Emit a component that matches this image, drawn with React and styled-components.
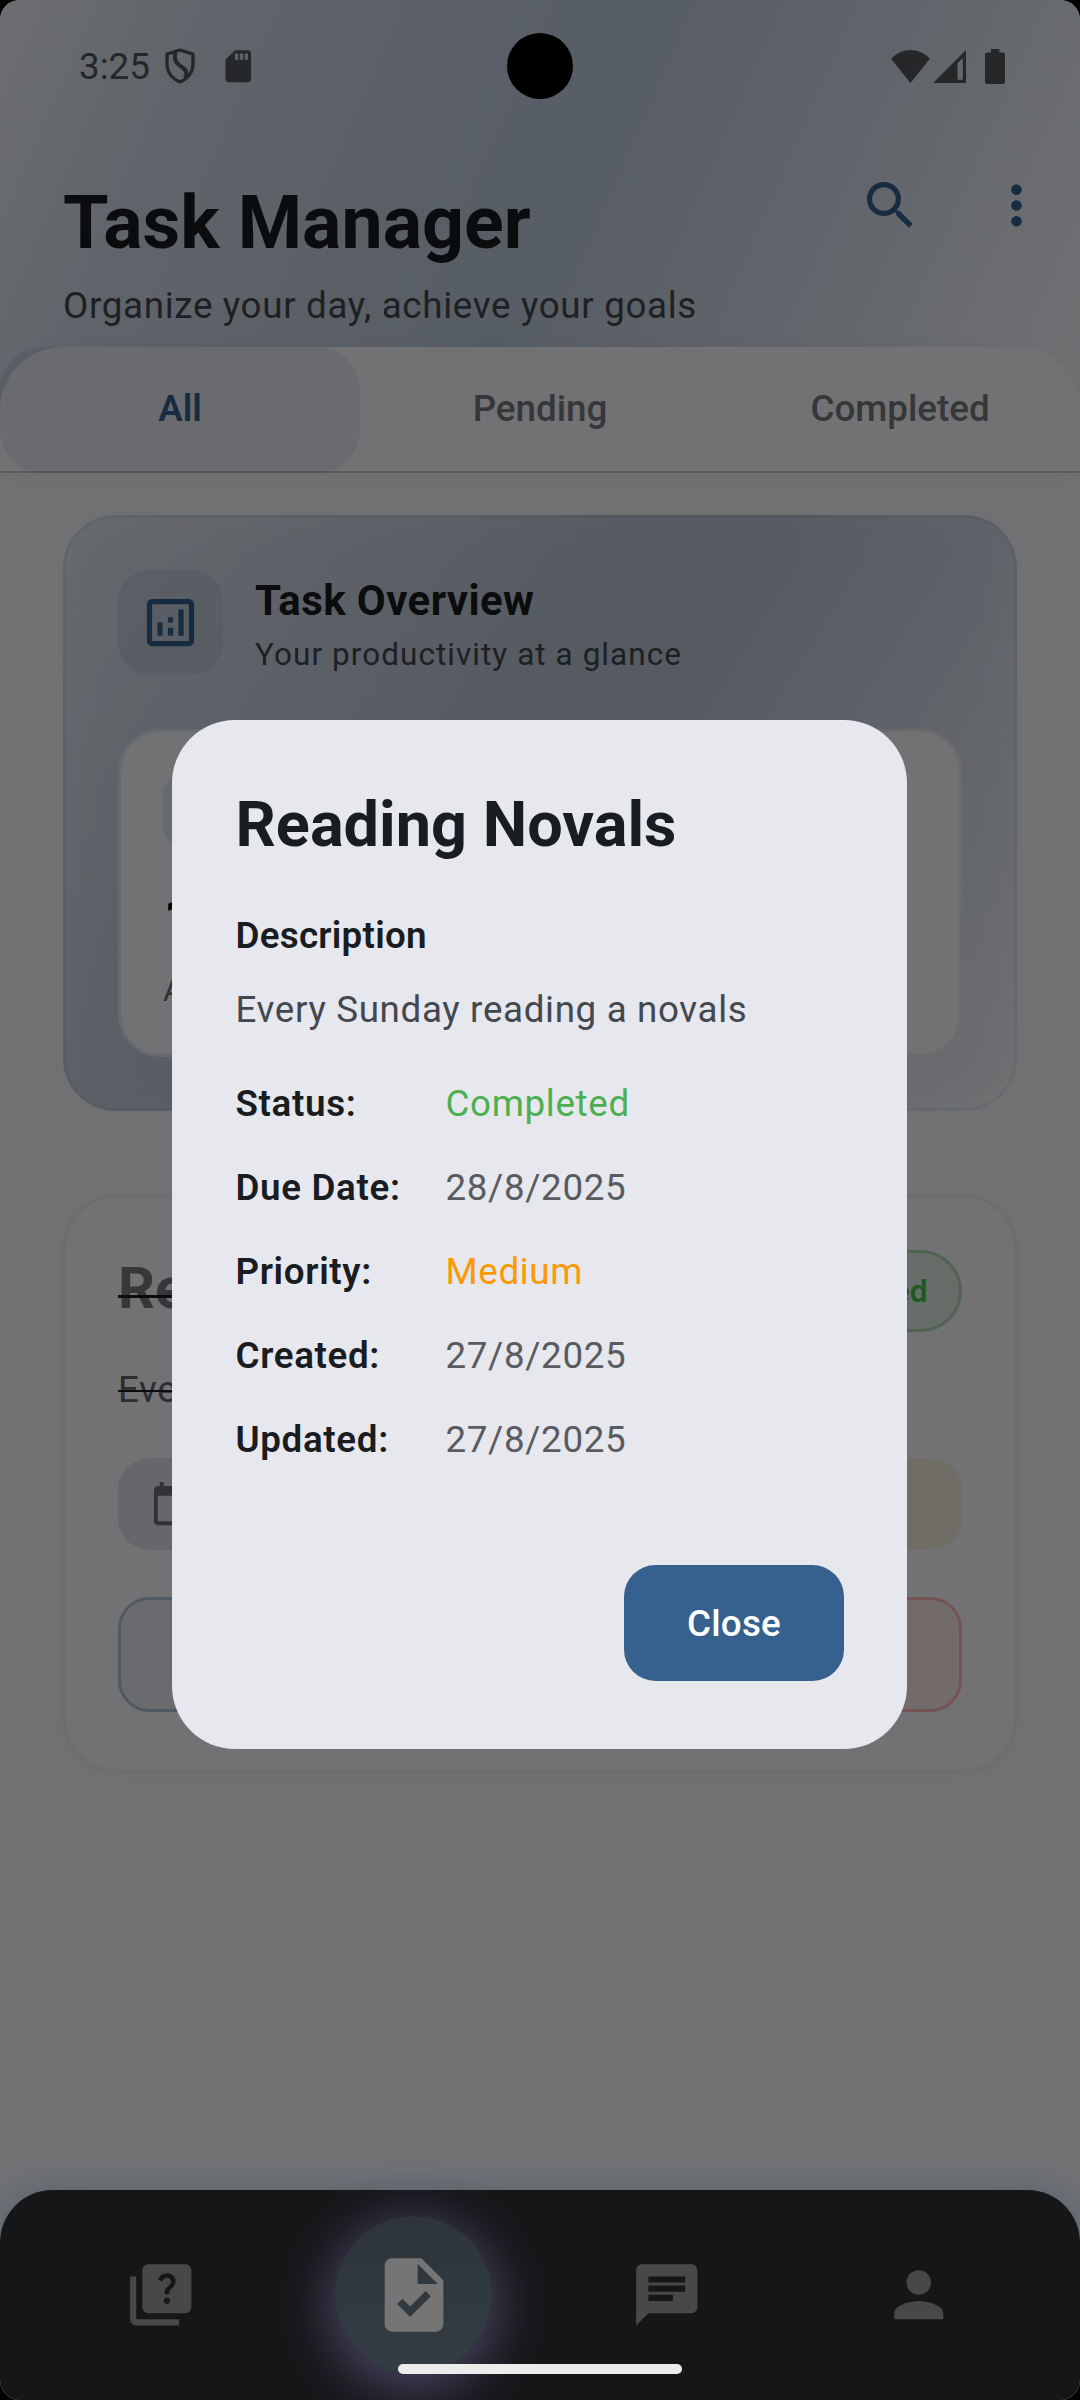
import React from "react";
import styled, { createGlobalStyle } from "styled-components";
import {
  MdSdCard, MdSearch, MdMoreVert, MdCalendarToday, MdQuiz, MdTask, MdChat, MdPerson,
} from "react-icons/md";

const c = {
  surface: "#f8f9fd",
  primary: "#36618e",
  ink: "#191c20",
  muted: "#43474e",
  p: (a) => `rgba(54, 97, 142, ${a})`,
};

const GlobalStyle = createGlobalStyle`
  * { box-sizing: border-box; }
  body { margin: 0; background: #000; font-family: Roboto, "Noto Sans", sans-serif; }
`;

const Screen = styled.div`
  position: relative;
  width: 1080px;
  height: 2400px;
  border-radius: 20px;
  overflow: hidden;
  background: ${c.surface};
  color: ${c.ink};
  display: flex;
  flex-direction: column;
`;

const Header = styled.header`
  height: 473px;
  flex: none;
  display: flex;
  flex-direction: column;
  background: linear-gradient(113.6deg, ${c.p(0.07)}, ${c.p(0.2)} 18%, ${c.p(0.3)} 50%, ${c.p(0.17)} 75%, ${c.p(0)});
`;

const StatusBar = styled.div`
  height: 132px;
  padding: 0 75px 0 79px;
  display: flex;
  align-items: center;
  justify-content: space-between;
  color: #54565a;
  font-size: 36.75px;
`;

const StatusGroup = styled.div`
  display: flex;
  align-items: center;
  svg { display: block; flex: none; }
`;

const Clock = styled.span`
  width: 86px;
`;

const TitleBar = styled.div`
  flex: 1;
  display: flex;
  justify-content: space-between;
  padding: 42px 32px 0 63px;
`;

const Titles = styled.div`
  display: flex;
  flex-direction: column;
  padding-top: 1.5px;
`;

const AppTitle = styled.h1`
  margin: 0;
  font-size: 73.5px;
  line-height: 94.5px;
  font-weight: 700;
`;

const AppSubtitle = styled.p`
  margin: 10px 0 0;
  font-size: 36.75px;
  line-height: 52.5px;
  letter-spacing: 0.67px;
  color: ${c.muted};
`;

const Actions = styled.div`
  display: flex;
  gap: 63px;
  color: ${c.primary};
  font-size: 63px;
  height: 63px;
`;

const Tabs = styled.nav`
  display: flex;
  height: 126px;
  background: ${c.surface};
  border-radius: 63px 63px 0 0;
  border-bottom: 2px solid #c3c6cf;
  box-shadow: 0 5px 26px rgba(0, 0, 0, 0.05);
`;

const Tab = styled.div`
  flex: 1;
  display: flex;
  align-items: center;
  justify-content: center;
  margin-bottom: -2px;
  padding-bottom: 4px;
  border-radius: 42px;
  font-size: 36.75px;
  font-weight: ${(p) => (p.$active ? 600 : 500)};
  color: ${(p) => (p.$active ? c.primary : "#75787d")};
  background: ${(p) => (p.$active ? c.p(0.1) : "transparent")};
`;

const Content = styled.main`
  flex: 1;
  display: flex;
  flex-direction: column;
  padding: 42px 63px 0;
  gap: 84px;
`;

const Overview = styled.section`
  position: relative;
  z-index: 0;
  height: 596px;
  padding: 52px;
  border: 3px solid ${c.p(0.08)};
  border-radius: 52.5px;
  background: linear-gradient(121.9deg, ${c.p(0.09)}, ${c.p(0.28)} 42%, ${c.p(0.28)} 55%, ${c.p(0)}) border-box;
  display: flex;
  flex-direction: column;
  gap: 53px;
  &::before {
    content: "";
    position: absolute;
    z-index: -1;
    inset: 0;
    border-radius: 52.5px;
    background: rgba(54, 70, 90, 0.05);
    filter: blur(18px);
  }
`;

const OverviewHead = styled.div`
  display: flex;
  gap: 32px;
`;

const OverviewIcon = styled.div`
  width: 105px;
  height: 105px;
  border-radius: 31.5px;
  background: ${c.p(0.1)};
  color: ${c.primary};
  display: flex;
  align-items: center;
  justify-content: center;
`;

const OverviewTitle = styled.h2`
  margin: -1px 0 0;
  font-size: 42px;
  line-height: 63px;
  font-weight: 700;
  letter-spacing: 0.39px;
`;

const OverviewText = styled.p`
  margin: 1.5px 0 0;
  font-size: 31.5px;
  line-height: 42px;
  letter-spacing: 1.05px;
  color: ${c.muted};
`;

const Stats = styled.div`
  display: flex;
  gap: 31.5px;
`;

const Stat = styled.div`
  flex: 1;
  height: 328px;
  padding: 42px;
  border: 3px solid ${(p) => (p.$rose ? "#f0e4ec" : "#dae6f2")};
  border-radius: 42px;
  background: ${c.surface};
`;

const StatIcon = styled.div`
  width: 73.5px;
  height: 73.5px;
  border-radius: 21px;
  background: #d7e6f5;
`;

const StatValue = styled.div`
  margin-top: 31.5px;
  font-size: 63px;
  line-height: 84px;
  font-weight: 700;
  color: #000;
`;

const StatLabel = styled.div`
  margin-top: 7px;
  font-size: 31.5px;
  line-height: 42px;
  white-space: nowrap;
  color: #66686c;
`;

const TaskCard = styled.article`
  height: 577px;
  padding: 52px;
  border: 3px solid #edeef2;
  border-radius: 52.5px;
  background: ${c.surface};
  box-shadow: 0 4px 14px rgba(0, 0, 0, 0.05);
  display: flex;
  flex-direction: column;
`;

const TaskTop = styled.div`
  display: flex;
  justify-content: space-between;
  height: 82px;
`;

const TaskTitle = styled.h3`
  position: relative;
  margin: 2px 0 0;
  font-size: 57.75px;
  line-height: 73.5px;
  height: 73.5px;
  font-weight: 700;
  color: #75787d;
  &::after {
    content: "";
    position: absolute;
    left: 0;
    right: 0;
    top: 43px;
    height: 3px;
    background: ${c.ink};
  }
`;

const Badge = styled.span`
  height: 82px;
  padding: 1px 31.5px 0;
  display: flex;
  align-items: center;
  border: 3px solid #b0d8b5;
  border-radius: 41px;
  background: #dfeee4;
  color: #43c348;
  font-size: 31.5px;
  font-weight: 600;
`;

const TaskText = styled.p`
  margin: 32px 0 0;
  font-size: 36.75px;
  line-height: 52.5px;
  letter-spacing: 0.656px;
  color: #606368;
  text-decoration: line-through 2px ${c.ink};
`;

const Split = styled.div`
  display: flex;
  gap: 31.5px;
  margin-top: ${(p) => p.$top}px;
`;

const Chip = styled.div`
  flex: 1;
  height: 92px;
  padding: 0 31.5px;
  display: flex;
  align-items: center;
  border-radius: 31.5px;
  color: #6b6e74;
  background: ${(p) => (p.$warn ? "#f4ede0" : "#dfe1e6")};
  svg { font-size: 47.25px; }
`;

const TaskButton = styled.button`
  flex: 1;
  height: 115px;
  border: 3px solid ${(p) => (p.$danger ? "#fbb8b5" : "#aec1d6")};
  border-radius: 31.5px;
  background: ${(p) => (p.$danger ? "#fbe6e8" : "#e4e9f1")};
`;

const BottomNav = styled.nav`
  height: 210px;
  flex: none;
  padding: 0 34.6px;
  display: flex;
  align-items: center;
  border-radius: 52.5px 52.5px 0 0;
  background: #2c3033;
  box-shadow: 0 0 38px rgba(30, 130, 200, 0.28);
`;

const NavItem = styled.div`
  flex: 1;
  display: flex;
  justify-content: center;
  color: #9e9e9e;
  font-size: 73.5px;
`;

const NavBubble = styled.div`
  width: 157.5px;
  height: 157.5px;
  border-radius: 50%;
  display: flex;
  align-items: center;
  justify-content: center;
  color: #fff;
  font-size: 88px;
  background: linear-gradient(#62747f, #718595);
  box-shadow: 0 10px 52px 8px rgba(165, 150, 220, 0.95);
`;

const Scrim = styled.div`
  position: absolute;
  inset: 0;
  padding: 69px 1px 0 0;
  display: flex;
  align-items: center;
  justify-content: center;
  background: rgba(0, 0, 0, 0.54);
`;

const Dialog = styled.section`
  width: 735px;
  height: 1029px;
  padding: 63px 63px 68px 63.5px;
  border-radius: 63px;
  background: #e6e8ee;
  display: flex;
  flex-direction: column;
`;

const DialogTitle = styled.h2`
  margin: 0 0 43px;
  font-size: 63px;
  line-height: 84px;
  font-weight: 700;
`;

const Label = styled.div`
  font-size: 36.75px;
  line-height: 52.5px;
  font-weight: 600;
  letter-spacing: ${(p) => (p.$tight ? 0.26 : 0.656)}px;
`;

const Description = styled.p`
  margin: 21px 0 42px;
  font-size: 36.75px;
  line-height: 52.5px;
  letter-spacing: 0.656px;
  color: ${c.muted};
`;

const Row = styled.div`
  display: grid;
  grid-template-columns: 210px 1fr;
  margin-bottom: 31.5px;
`;

const Value = styled.div`
  font-size: 36.75px;
  line-height: 52.5px;
  letter-spacing: 0.656px;
  color: ${(p) => p.$color || "#5a5b60"};
`;

const CloseButton = styled.button`
  align-self: flex-end;
  margin-top: auto;
  width: 220px;
  height: 116px;
  border: 0;
  border-radius: 31.5px;
  background: ${c.primary};
  color: #fff;
  font: 500 36.75px Roboto, sans-serif;
  letter-spacing: 0.26px;
`;

const Camera = styled.div`
  position: absolute;
  left: 507px;
  top: 33px;
  width: 66px;
  height: 66px;
  border-radius: 50%;
  background: #000;
`;

const HomeHandle = styled.div`
  position: absolute;
  left: 398px;
  bottom: 26px;
  width: 284px;
  height: 10px;
  border-radius: 5px;
  background: #ebeded;
`;

const ShieldIcon = () => (
  <svg width="30" height="36" viewBox="0 0 30 36" fill="none" stroke="currentColor" strokeWidth="3.4">
    <path d="M15 2 L28 6.2 V16 C28 24.5 22.5 31 15 34 C7.5 31 2 24.5 2 16 V6.2 Z" strokeLinejoin="round" />
    <path d="M10.5 4.5 C8 13 13 16.5 17.5 19.5 C22.5 23 22.5 27 19.5 30" strokeWidth="4" />
  </svg>
);

const WifiIcon = () => (
  <svg width="39" height="33" viewBox="0 0 39 33" fill="currentColor">
    <path d="M19.5 33 L0 8.8 C11 -2.9 28 -2.9 39 8.8 Z" />
  </svg>
);

const SignalIcon = () => (
  <svg width="33" height="33" viewBox="0 0 33 33" fill="currentColor" fillRule="evenodd">
    <path d="M33 0 V33 H0 Z M29.8 8 L24.5 13.2 V29.7 H29.8 Z" />
  </svg>
);

const BatteryIcon = () => (
  <svg width="20" height="35" viewBox="0 0 20 35" fill="currentColor">
    <path d="M6 0 H14.5 V3.5 H18 Q20 3.5 20 5.5 V33 Q20 35 18 35 H2 Q0 35 0 33 V5.5 Q0 3.5 2 3.5 H6 Z" />
  </svg>
);

const ChartIcon = () => (
  <svg width="63" height="63" viewBox="0 0 24 24" fill="currentColor">
    <path d="M19 3H5c-1.1 0-2 .9-2 2v14c0 1.1.9 2 2 2h14c1.1 0 2-.9 2-2V5c0-1.1-.9-2-2-2zm0 16H5V5h14v14zM7 12h2v5H7zm8-5h2v10h-2zm-4 7h2v3h-2zm0-4h2v2h-2z" />
  </svg>
);

const Gap = styled.span`
  width: ${(p) => p.$w}px;
`;

const details = [
  ["Status:", "Completed", "#4caf50"],
  ["Due Date:", "28/8/2025"],
  ["Priority:", "Medium", "#ff9800"],
  ["Created:", "27/8/2025"],
  ["Updated:", "27/8/2025"],
];

export default function App() {
  return (
    <>
      <GlobalStyle />
      <Screen>
        <Header>
          <StatusBar>
            <StatusGroup>
              <Clock>3:25</Clock>
              <ShieldIcon />
              <Gap $w={24} />
              <MdSdCard size={38.5} />
            </StatusGroup>
            <StatusGroup>
              <WifiIcon />
              <Gap $w={3} />
              <SignalIcon />
              <Gap $w={19} />
              <BatteryIcon />
            </StatusGroup>
          </StatusBar>
          <TitleBar>
            <Titles>
              <AppTitle>Task Manager</AppTitle>
              <AppSubtitle>Organize your day, achieve your goals</AppSubtitle>
            </Titles>
            <Actions>
              <MdSearch />
              <MdMoreVert />
            </Actions>
          </TitleBar>
          <Tabs>
            <Tab $active>All</Tab>
            <Tab>Pending</Tab>
            <Tab>Completed</Tab>
          </Tabs>
        </Header>

        <Content>
          <Overview>
            <OverviewHead>
              <OverviewIcon><ChartIcon /></OverviewIcon>
              <div>
                <OverviewTitle>Task Overview</OverviewTitle>
                <OverviewText>Your productivity at a glance</OverviewText>
              </div>
            </OverviewHead>
            <Stats>
              <Stat>
                <StatIcon />
                <StatValue>1</StatValue>
                <StatLabel>All</StatLabel>
              </Stat>
              <Stat $rose />
            </Stats>
          </Overview>

          <TaskCard>
            <TaskTop>
              <TaskTitle>Reading Novals</TaskTitle>
              <Badge>Completed</Badge>
            </TaskTop>
            <TaskText>Every Sunday reading a novals</TaskText>
            <Split $top={41.5}>
              <Chip><MdCalendarToday /></Chip>
              <Chip $warn />
            </Split>
            <Split $top={47}>
              <TaskButton />
              <TaskButton $danger />
            </Split>
          </TaskCard>
        </Content>

        <BottomNav>
          <NavItem><MdQuiz /></NavItem>
          <NavItem><NavBubble><MdTask /></NavBubble></NavItem>
          <NavItem><MdChat /></NavItem>
          <NavItem><MdPerson /></NavItem>
        </BottomNav>

        <Scrim>
          <Dialog role="dialog">
            <DialogTitle>Reading Novals</DialogTitle>
            <Label $tight>Description</Label>
            <Description>Every Sunday reading a novals</Description>
            {details.map(([label, value, color]) => (
              <Row key={label}>
                <Label>{label}</Label>
                <Value $color={color}>{value}</Value>
              </Row>
            ))}
            <CloseButton>Close</CloseButton>
          </Dialog>
        </Scrim>
        <Camera />
        <HomeHandle />
      </Screen>
    </>
  );
}
